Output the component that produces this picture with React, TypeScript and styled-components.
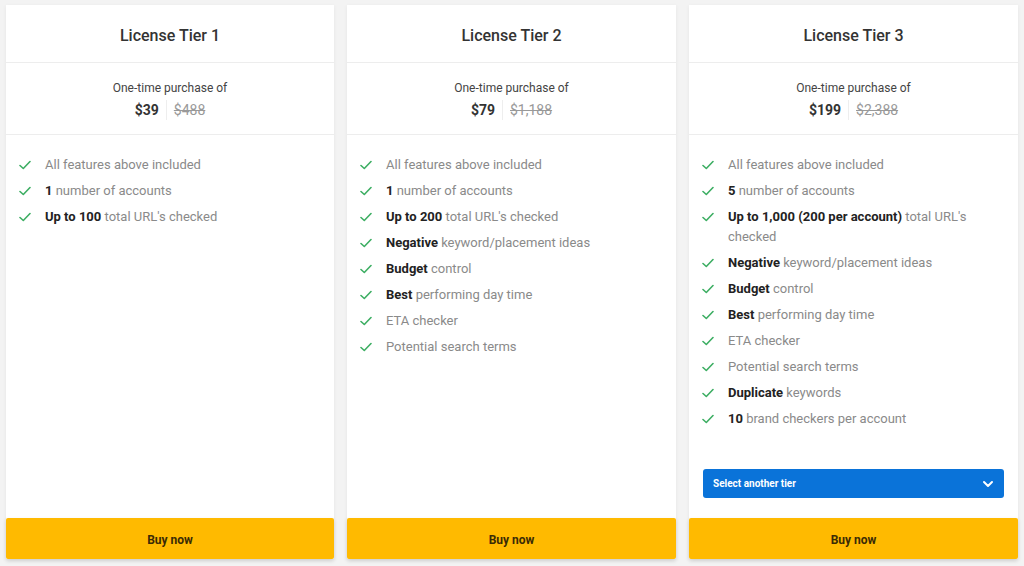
import React from "react";
import styled, { createGlobalStyle } from "styled-components";

const Global = createGlobalStyle`
  html, body { margin: 0; padding: 0; background: #f3f3f3; }
  body { font-family: Roboto, "Noto Sans", Arial, sans-serif; }
  * { box-sizing: border-box; }
`;

const Page = styled.div`
  display: flex;
  gap: 13px;
  padding: 5px 6px 7px 6px;
  width: 1024px;
  height: 566px;
  background: #f3f3f3;
`;

const Card = styled.div`
  flex: 0 0 ${(p: { $w: number }) => p.$w}px;
  display: flex;
  flex-direction: column;
  background: #fff;
  box-shadow: 0 1px 4px rgba(0, 0, 0, 0.06);
`;

const Header = styled.div`
  height: 58px;
  display: flex;
  align-items: center;
  justify-content: center;
  border-bottom: 1px solid #ededed;
  font-size: 16px;
  font-weight: 500;
  color: #333;
  padding-top: 4px;
`;

const PriceBox = styled.div`
  height: 72px;
  display: flex;
  flex-direction: column;
  align-items: center;
  justify-content: center;
  border-bottom: 1px solid #ededed;
  gap: 5px;
  padding-top: 3px;
`;

const PriceLabel = styled.div`
  font-size: 12px;
  color: #444;
`;

const PriceRow = styled.div`
  display: flex;
  align-items: center;
  font-size: 14px;
`;

const Price = styled.span`
  font-weight: 700;
  color: #333;
  padding-right: 7px;
  border-right: 1px solid #eee;
  margin-right: 7px;
  line-height: 20px;
`;

const OldPrice = styled.span`
  color: #999;
  text-decoration: line-through;
  line-height: 20px;
`;

const Features = styled.ul`
  flex: 1;
  list-style: none;
  margin: 0;
  padding: 20px 14px 0 13px;
`;

const Item = styled.li`
  display: flex;
  align-items: flex-start;
  font-size: 13px;
  line-height: 20px;
  color: #8a8a8a;
  margin-bottom: 6px;
`;

const Check = styled.svg`
  flex: 0 0 12px;
  width: 12px;
  height: 12px;
  margin-top: 4px;
  margin-right: 14px;
`;

const Strong = styled.b`
  color: #222;
  font-weight: 700;
`;

const SelectBox = styled.div`
  margin: 0 14px 20px 14px;
  height: 29px;
  border-radius: 3px;
  background: #0a73d9;
  color: #fff;
  font-size: 10px;
  font-weight: 700;
  display: flex;
  align-items: center;
  justify-content: space-between;
  padding: 0 10px;
`;

const BuyButton = styled.button`
  height: 41px;
  border: none;
  border-radius: 2px;
  background: #ffba00;
  color: #3a2b06;
  font-family: inherit;
  font-size: 12px;
  font-weight: 700;
  padding-top: 3px;
  box-shadow: 0 2px 4px rgba(0, 0, 0, 0.12);
  cursor: pointer;
`;

type F = { b?: string; t: string };

const tiers: { name: string; price: string; old: string; w: number; features: F[]; select?: boolean }[] = [
  {
    name: "License Tier 1",
    price: "$39",
    old: "$488",
    w: 328,
    features: [
      { t: "All features above included" },
      { b: "1", t: " number of accounts" },
      { b: "Up to 100", t: " total URL's checked" },
    ],
  },
  {
    name: "License Tier 2",
    price: "$79",
    old: "$1,188",
    w: 329,
    features: [
      { t: "All features above included" },
      { b: "1", t: " number of accounts" },
      { b: "Up to 200", t: " total URL's checked" },
      { b: "Negative", t: " keyword/placement ideas" },
      { b: "Budget", t: " control" },
      { b: "Best", t: " performing day time" },
      { t: "ETA checker" },
      { t: "Potential search terms" },
    ],
  },
  {
    name: "License Tier 3",
    price: "$199",
    old: "$2,388",
    w: 329,
    select: true,
    features: [
      { t: "All features above included" },
      { b: "5", t: " number of accounts" },
      { b: "Up to 1,000 (200 per account)", t: " total URL's checked" },
      { b: "Negative", t: " keyword/placement ideas" },
      { b: "Budget", t: " control" },
      { b: "Best", t: " performing day time" },
      { t: "ETA checker" },
      { t: "Potential search terms" },
      { b: "Duplicate", t: " keywords" },
      { b: "10", t: " brand checkers per account" },
    ],
  },
];

const CheckIcon = () => (
  <Check viewBox="0 0 12 12">
    <polyline points="1,6.5 4.3,9.5 11,2.5" fill="none" stroke="#3dae63" strokeWidth="1.6" strokeLinecap="round" strokeLinejoin="round" />
  </Check>
);

export default function App() {
  return (
    <>
      <Global />
      <Page>
        {tiers.map((tier) => (
          <Card key={tier.name} $w={tier.w}>
            <Header>{tier.name}</Header>
            <PriceBox>
              <PriceLabel>One-time purchase of</PriceLabel>
              <PriceRow>
                <Price>{tier.price}</Price>
                <OldPrice>{tier.old}</OldPrice>
              </PriceRow>
            </PriceBox>
            <Features>
              {tier.features.map((f, i) => (
                <Item key={i}>
                  <CheckIcon />
                  <span>
                    {f.b && <Strong>{f.b}</Strong>}
                    {f.t}
                  </span>
                </Item>
              ))}
            </Features>
            {tier.select && (
              <SelectBox>
                <span>Select another tier</span>
                <svg width="12" height="12" viewBox="0 0 12 12">
                  <polyline points="2,4 6,8 10,4" fill="none" stroke="#fff" strokeWidth="2" strokeLinecap="round" strokeLinejoin="round" />
                </svg>
              </SelectBox>
            )}
            <BuyButton>Buy now</BuyButton>
          </Card>
        ))}
      </Page>
    </>
  );
}
